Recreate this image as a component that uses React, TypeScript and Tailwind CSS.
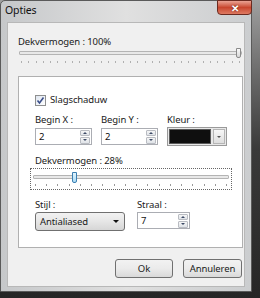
import React from "react";

const font = { fontFamily: '"Noto Sans", "Open Sans", sans-serif' };

function Ticks({ n, color }: { n: number; color: string }) {
  return (
    <div className="flex justify-between">
      {Array.from({ length: n }).map((_, i) => (
        <span key={i} className="block w-px h-[2px]" style={{ background: color }} />
      ))}
    </div>
  );
}

function Spin() {
  return (
    <div className="flex flex-col w-[10px] h-[14px] gap-px">
      <div className="flex-1 flex items-center justify-center border border-[#b9bcc2] bg-gradient-to-b from-[#f6f6f6] to-[#dfe3e8] rounded-[1px]">
        <span className="block w-0 h-0 border-l-[2px] border-r-[2px] border-b-[2px] border-l-transparent border-r-transparent border-b-[#3d4a66]" />
      </div>
      <div className="flex-1 flex items-center justify-center border border-[#b9bcc2] bg-gradient-to-b from-[#f6f6f6] to-[#dfe3e8] rounded-[1px]">
        <span className="block w-0 h-0 border-l-[2px] border-r-[2px] border-t-[2px] border-l-transparent border-r-transparent border-t-[#3d4a66]" />
      </div>
    </div>
  );
}

function NumInput({ value, w }: { value: string; w: string }) {
  return (
    <div className={`${w} h-[17px] border border-[#abadb3] bg-white flex items-center justify-between pl-[3px] pr-px`}>
      <span className="text-[9.5px] leading-none text-[#111]">{value}</span>
      <Spin />
    </div>
  );
}

export default function App() {
  return (
    <div
      className="w-[260px] h-[298px] overflow-hidden bg-gradient-to-b from-[#a0a0a0] via-[#3a3a3a] to-[#262626] text-[#1a1a1a] tracking-[-0.1px]"
      style={font}
    >
      <div className="w-[252px] h-[292px] border border-[#5a5a5a] rounded-t-[5px] bg-gradient-to-r from-[#c6c8ca] via-[#e0e0e0] to-[#cbcdcf] flex flex-col">
        {/* title bar */}
        <div className="h-[21px] flex items-start justify-between">
          <span className="pl-[4px] pt-[3px] text-[10.5px] leading-[13px] text-[#111]">Opties</span>
          <div className="w-[35px] h-[15px] -mt-px -mr-px rounded-b-[4px] border border-[#6b2a20] bg-gradient-to-b from-[#e9a293] via-[#c8462e] to-[#de7a62] flex items-center justify-center">
            <span className="text-white text-[10px] font-bold leading-none [text-shadow:0_0_2px_#5a1a10]">✕</span>
          </div>
        </div>
        {/* client */}
        <div className="ml-[6px] w-[238px] h-[265px] bg-[#f0f0f0] border border-[#b8b8b8] flex flex-col">
          <div className="pl-[10px] pt-[12px] text-[9.5px] leading-[14px]">Dekvermogen : 100%</div>
          <div className="ml-[11px] w-[223px] mt-[-1px]">
            <div className="relative h-[10px] flex items-center">
              <div className="w-full h-[4px] border border-[#b4b4b4] bg-[#e8e8e8] rounded-[1px]" />
              <div className="absolute right-[1px] top-0 w-[5px] h-[10px] border border-[#8a8a8a] rounded-b-[2px] bg-gradient-to-b from-[#fafafa] to-[#d8d8d8]" />
            </div>
            <div className="mt-[3px] px-[2px]">
              <Ticks n={31} color="#b0b0b0" />
            </div>
          </div>
          {/* panel */}
          <div className="ml-[10px] mt-[13px] w-[225px] h-[172px] border border-[#b0b0b0] bg-white flex flex-col pl-[16px]">
            <div className="mt-[17px] flex items-center gap-[4px]">
              <div className="w-[11px] h-[11px] border border-[#8e8f8f] bg-gradient-to-br from-[#dfe6f0] to-[#ffffff] flex items-center justify-center">
                <svg width="9" height="9" viewBox="0 0 9 9">
                  <path d="M1.5 4.5 L3.5 7 L7.5 1.5" fill="none" stroke="#3b4f8a" strokeWidth="1.6" />
                </svg>
              </div>
              <span className="text-[9.5px] leading-[12px]">Slagschaduw</span>
            </div>
            <div className="mt-[8px] flex gap-[9px]">
              <div className="flex flex-col gap-[2px]">
                <span className="text-[9.5px] leading-[12px]">Begin X :</span>
                <NumInput value="2" w="w-[57px]" />
              </div>
              <div className="flex flex-col gap-[2px]">
                <span className="text-[9.5px] leading-[12px]">Begin Y :</span>
                <NumInput value="2" w="w-[57px]" />
              </div>
              <div className="flex flex-col gap-[1px]">
                <span className="text-[9.5px] leading-[12px]">Kleur :</span>
                <div className="w-[60px] h-[19px] border border-[#9a9a9a] bg-[#e8e8e8] flex items-center gap-[2px] p-px">
                  <div className="w-[43px] h-[15px] bg-[#0f0f0f] border border-[#5a5a5a]" />
                  <div className="w-[12px] h-[15px] border border-[#b5b5b5] bg-gradient-to-b from-[#f7f7f7] to-[#dedede] flex items-center justify-center">
                    <span className="block w-0 h-0 border-l-[2px] border-r-[2px] border-t-[2px] border-l-transparent border-r-transparent border-t-[#555]" />
                  </div>
                </div>
              </div>
            </div>
            <div className="mt-[9px] text-[9.5px] leading-[12px]">Dekvermogen : 28%</div>
            <div className="ml-[-5px] mt-[1px] w-[202px] h-[22px] border border-dotted border-[#666] flex flex-col px-[2px] pt-[3px]">
              <div className="relative h-[10px] flex items-center">
                <div className="w-full h-[4px] border border-[#b4b4b4] bg-[#e8e8e8] rounded-[1px]" />
                <div className="absolute left-[39px] top-0 w-[5px] h-[11px] border border-[#3c7fb1] rounded-b-[2px] bg-gradient-to-b from-[#e3f4fc] to-[#a9dbf6]" />
              </div>
              <div className="mt-[2px] px-[2px]">
                <Ticks n={18} color="#9a9a9a" />
              </div>
            </div>
            <div className="mt-[9px] flex gap-[12px]">
              <div className="flex flex-col gap-[1px]">
                <span className="text-[9.5px] leading-[12px]">Stijl :</span>
                <div className="w-[90px] h-[19px] rounded-[3px] border border-[#707070] bg-gradient-to-b from-[#f2f2f2] via-[#e6e6e6] to-[#d6d6d6] flex items-center justify-between pl-[4px] pr-[5px]">
                  <span className="text-[9.5px] leading-none">Antialiased</span>
                  <span className="block w-0 h-0 border-l-[3px] border-r-[3px] border-t-[3px] border-l-transparent border-r-transparent border-t-[#111]" />
                </div>
              </div>
              <div className="flex flex-col gap-[1px]">
                <span className="text-[9.5px] leading-[12px]">Straal :</span>
                <NumInput value="7" w="w-[53px]" />
              </div>
            </div>
          </div>
          {/* buttons */}
          <div className="mt-[11px] flex justify-end gap-[10px] pr-[2px]">
            <button className="w-[58px] h-[19px] rounded-[3px] border border-[#707070] bg-gradient-to-b from-[#f2f2f2] via-[#ebebeb] to-[#d9d9d9] text-[9.5px] leading-none">
              Ok
            </button>
            <button className="w-[59px] h-[19px] rounded-[3px] border border-[#707070] bg-gradient-to-b from-[#f2f2f2] via-[#ebebeb] to-[#d9d9d9] text-[9.5px] leading-none">
              Annuleren
            </button>
          </div>
        </div>
      </div>
    </div>
  );
}
